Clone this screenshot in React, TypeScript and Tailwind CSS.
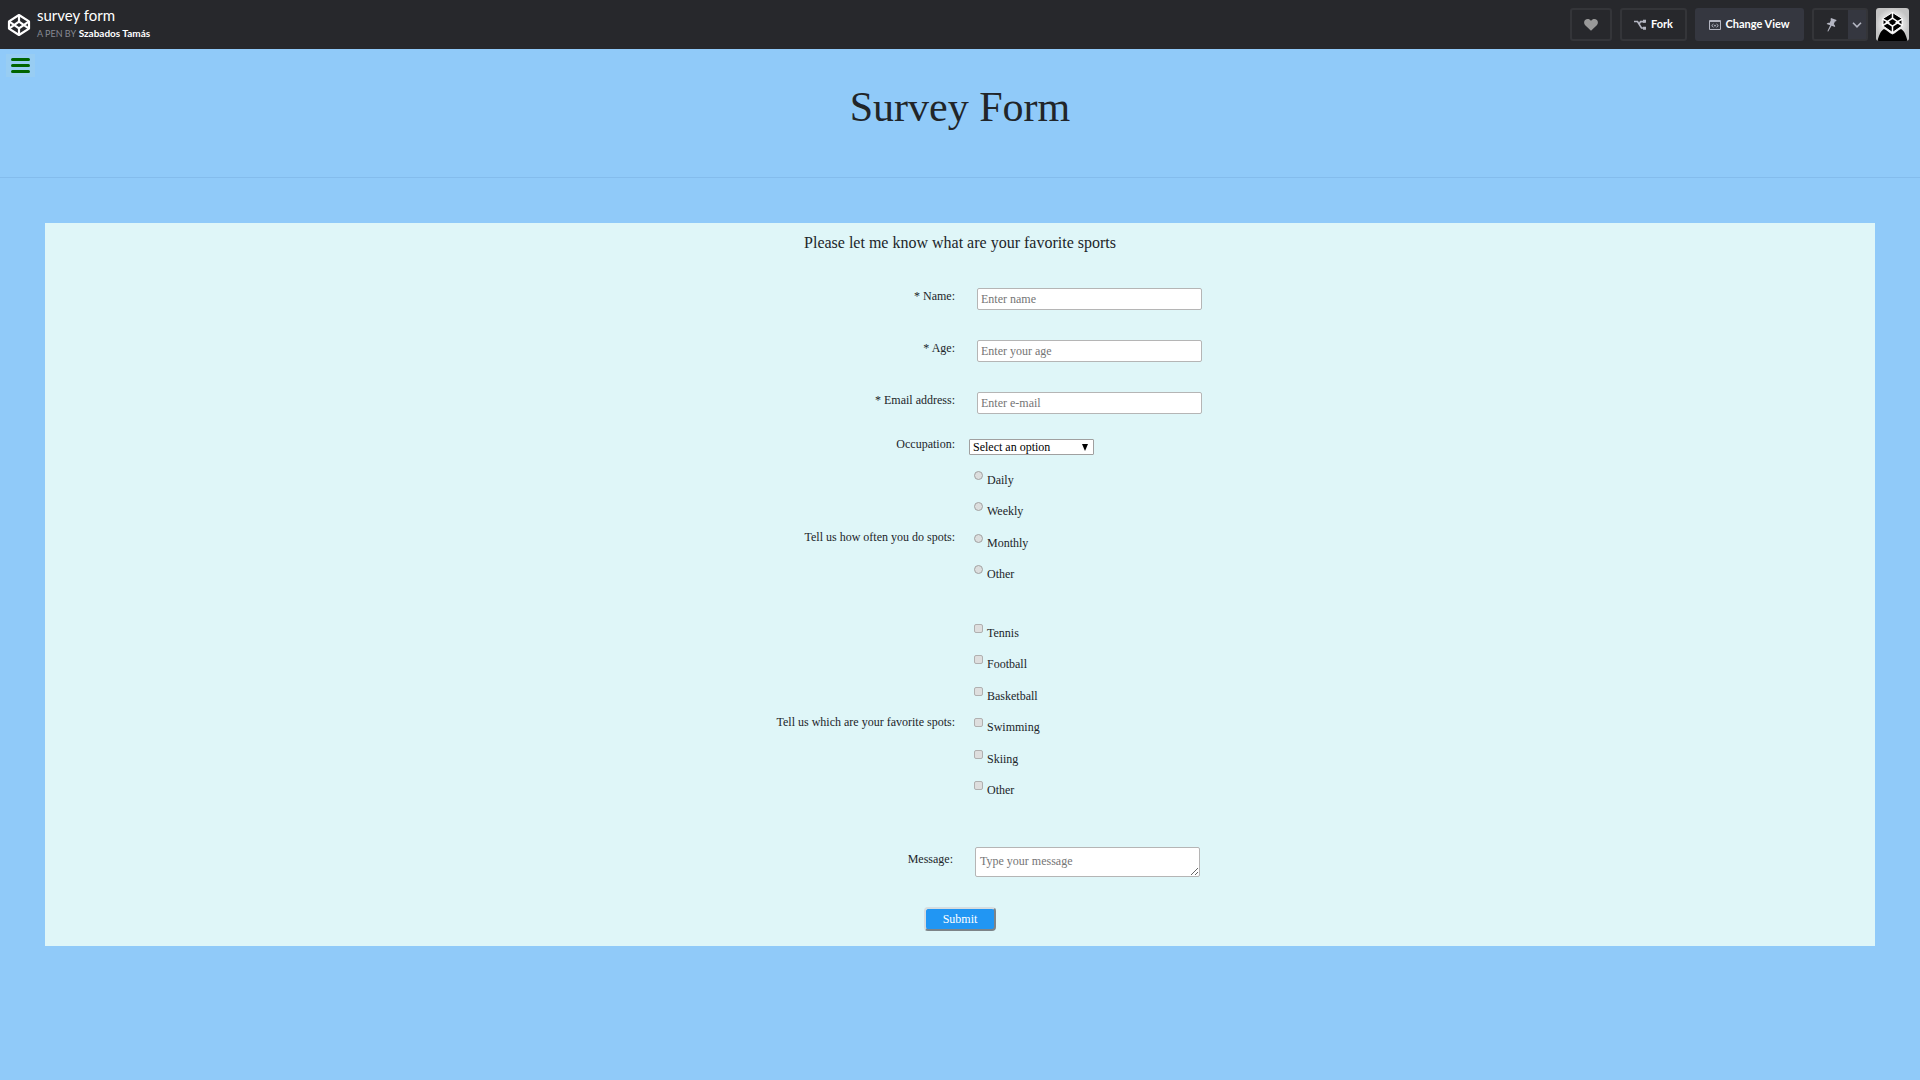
import type { ReactNode } from "react";

const occupations = ["Select an option", "Student", "Full time job", "Other"];
const frequencies = ["Daily", "Weekly", "Monthly", "Other"];
const sports = ["Tennis", "Football", "Basketball", "Swimming", "Skiing", "Other"];

function CodepenLogo() {
  return (
    <svg viewBox="0 0 24 24" className="size-6" fill="none" stroke="#fff" strokeWidth="2.2" strokeLinejoin="round" aria-hidden="true">
      <path d="M12 2 22 8.4v7.2L12 22 2 15.6V8.4Z" />
      <path d="M12 2v6.6M12 22v-6.6M2 8.4l10 7 10-7M2 15.6l10-7 10 7" />
    </svg>
  );
}

function HeartIcon() {
  return (
    <svg viewBox="0 0 14 12" className="h-3 w-3.5" fill="#999" aria-hidden="true">
      <path d="M7 11.8 1.2 6.3C-.3 4.700-.2 2.300 1.100 1.100 2.800-.5 5.600-.2 7 2 8.400-.2 11.200-.5 12.900 1.100c1.300 1.200 1.400 3.600-.1 5.200Z" />
    </svg>
  );
}

function ForkIcon() {
  return (
    <svg viewBox="0 0 13 12" className="h-3 w-[13px]" fill="none" stroke="#b4b6c2" strokeWidth="1.600" aria-hidden="true">
      <path d="M0 2.500h3.500l4 6.500H11M5.200 4.800 6.600 2.600H11" />
      <path d="M9 .8h3v3H9zM9 7.800h3v3H9z" fill="#b4b6c2" stroke="none" />
    </svg>
  );
}

function ViewIcon() {
  return (
    <svg viewBox="0 0 12 10" className="h-2.5 w-3" fill="none" stroke="#b4b6c2" aria-hidden="true">
      <path d="M.5.5h11v9H.5zM.5 1.500h11" />
      <path d="M4.500 4 2.700 5.600l1.800 1.600M7.500 4l1.800 1.600-1.800 1.600" />
      <circle cx="6" cy="5.600" r=".9" fill="#b4b6c2" stroke="none" />
    </svg>
  );
}

function PinIcon() {
  return (
    <svg viewBox="0 0 11 14" className="h-3.5 w-[11px]" fill="#b4b6c2" aria-hidden="true">
      <path d="M5 0 10.500 2 10 3.400 9 3.200 7.800 6.200c1 .6 1.500 1.600 1.300 2.800L5.600 7.800 2.200 13.500l-.8-.3 2.800-6L.6 5.900c.7-1 1.800-1.300 3-1L4.900 1.900 4.500 1.300Z" />
    </svg>
  );
}

function Avatar() {
  return (
    <svg viewBox="0 0 33 33" className="size-[33px] rounded-[3px]" aria-hidden="true">
      <defs>
        <radialGradient id="halo">
          <stop offset="0.300" stopColor="#fff" />
          <stop offset="1" stopColor="#c4c4c4" />
        </radialGradient>
      </defs>
      <path d="M0 0h33v33H0z" fill="url(#halo)" />
      <path d="M1.500 33C3 27 5 22.500 8 21c3.500 1.500 5 4 8.500 5.500C20 25 21.500 22.500 25 21c3 1.500 5 6 6.500 12Z" />
      <path d="M16.500 4.500 26 10.500v7.500l-9.500 6.500L7 18v-7.500Z" fill="#000" stroke="#fff" strokeWidth="1" />
      <g fill="none" stroke="#fff" strokeWidth="1.500">
        <path d="M16.500 4v6.500M16.500 18v7M6.500 11l6 3.200-6 3.300M26.500 11l-6 3.200 6 3.300" />
        <path d="m10.500 14.200 6-4 6 4-6 4Z" />
      </g>
    </svg>
  );
}

function Field({ id, label, placeholder, type }: { id: string; label: string; placeholder: string; type: string }) {
  return (
    <div className="mb-[30px] grid grid-cols-2">
      <label htmlFor={id} className="pr-[5px] text-right">
        {label}
      </label>
      <div className="flex pl-[17px]">
        <input
          id={id}
          type={type}
          placeholder={placeholder}
          className="h-[22px] w-[225px] rounded-xs border border-[#b5b5b5] bg-white px-[3px] placeholder:text-[#757575]"
        />
      </div>
    </div>
  );
}

function Choice({ kind, name, label }: { kind: "radio" | "checkbox"; name: string; label: string }) {
  const id = name + "-" + label.toLowerCase();
  return (
    <li className="flex h-5 items-start gap-1">
      <input
        id={id}
        type={kind}
        name={name}
        className={
          kind === "radio"
            ? "mt-0.5 size-[9px] appearance-none rounded-full border border-[#a2a2a2] bg-[#dcdede] checked:bg-[#555]"
            : "mt-0.5 size-[9px] appearance-none rounded-[2px] border border-[#b0b0b0] bg-[#dedede] checked:bg-[#555]"
        }
      />
      <label htmlFor={id} className="mt-[3px]">
        {label}
      </label>
    </li>
  );
}

function ChoiceGroup({ legend, listClass, children }: { legend: string; listClass: string; children: ReactNode }) {
  return (
    <div role="group" aria-label={legend} className="grid grid-cols-2 items-center">
      <p className="pr-[5px] text-right">{legend}</p>
      <ul className={"flex flex-col justify-between pb-[22px] pl-3.5 " + listClass}>{children}</ul>
    </div>
  );
}

const outlined = "flex items-center justify-center rounded-[3px] border-2 border-[#343539] h-[33px]";

export default function App() {
  return (
    <div className="min-h-screen bg-[#90caf9] font-['Liberation_Serif',serif] text-[#212529]">
      <header className="flex h-[49px] items-center justify-between bg-[#27282c] pr-[11px] pl-[7px] font-['Lato',sans-serif] text-white">
        <div className="flex items-center gap-1.5">
          <a href="#home" aria-label="CodePen">
            <CodepenLogo />
          </a>
          <div className="pb-0.5">
            <h2 className="text-[15px] leading-5">survey form</h2>
            <p className="text-[10px] leading-4">
              <span className="text-[9px] text-[#868993]">A PEN BY</span>{" "}
              <a href="#author" className="font-bold">
                Szabados Tamás
              </a>
            </p>
          </div>
        </div>
        <div className="flex items-center gap-2 text-[11px] font-bold">
          <button aria-label="Love" className={outlined + " w-[42px]"}>
            <HeartIcon />
          </button>
          <button className={outlined + " w-[67px] gap-1"}>
            <ForkIcon />
            Fork
          </button>
          <button className="flex h-[33px] w-[109px] items-center justify-center gap-1 rounded-[3px] bg-[#353740]">
            <ViewIcon />
            Change View
          </button>
          <div className={outlined + " w-14"}>
            <button aria-label="Pin" className="flex h-full flex-1 items-center justify-center">
              <PinIcon />
            </button>
            <button aria-label="More" className="flex h-full w-[18px] items-center justify-center bg-[#353740]">
              <svg viewBox="0 0 10 6" className="h-1.5 w-2.5" fill="none" stroke="#b4b6c2" strokeWidth="1.600" aria-hidden="true">
                <path d="m1 .8 4 4 4-4" />
              </svg>
            </button>
          </div>
          <button aria-label="Profile">
            <Avatar />
          </button>
        </div>
      </header>

      <div className="relative h-[129px] border-b border-[#84bcec]">
        <button aria-label="Menu" className="absolute top-[5px] left-1.5 flex h-[23px] w-[29px] flex-col items-center justify-center gap-[3px] bg-[#98cdf3]">
          <span className="h-[3px] w-[19px] rounded-xs bg-[#006400]" />
          <span className="h-[3px] w-[19px] rounded-xs bg-[#006400]" />
          <span className="h-[3px] w-[19px] rounded-xs bg-[#006400]" />
        </button>
        <h1 className="pt-[33px] text-center text-[42px] leading-[50px]">Survey Form</h1>
      </div>

      <main className="mx-[45px] mt-[45px] bg-[#dff6f8] pb-[15px] text-xs leading-4">
        <p className="pt-[9px] pb-[34px] text-center text-base leading-[22px]">Please let me know what are your favorite sports</p>
        <form>
          <Field id="name" type="text" label="* Name:" placeholder="Enter name" />
          <Field id="age" type="number" label="* Age:" placeholder="Enter your age" />
          <Field id="email" type="email" label="* Email address:" placeholder="Enter e-mail" />

          <div className="-mt-2 mb-3.5 grid grid-cols-2">
            <label htmlFor="occupation" className="pr-[5px] text-right">
              Occupation:
            </label>
            <div className="pt-[3px] pl-[9px]">
              <div className="relative w-[125px]">
                <select id="occupation" className="block h-4 w-full appearance-none rounded-[1px] border border-[#a0a0a0] bg-white pl-[3px] leading-[14px] text-black">
                  {occupations.map((o) => (
                    <option key={o}>{o}</option>
                  ))}
                </select>
                <svg viewBox="0 0 6 7" className="pointer-events-none absolute top-[5px] right-1.5 h-[7px] w-1.5" aria-hidden="true">
                  <path d="M0 0h6L3 7Z" />
                </svg>
              </div>
            </div>
          </div>

          <ChoiceGroup legend="Tell us how often you do spots:" listClass="h-[136px]">
            {frequencies.map((f) => (
              <Choice key={f} kind="radio" name="frequency" label={f} />
            ))}
          </ChoiceGroup>
          <div className="mt-[17px]">
            <ChoiceGroup legend="Tell us which are your favorite spots:" listClass="h-[199px]">
              {sports.map((s) => (
                <Choice key={s} kind="checkbox" name="sport" label={s} />
              ))}
            </ChoiceGroup>
          </div>

          <div className="mt-[26px] grid grid-cols-2">
            <label htmlFor="message" className="pt-1 pr-[7px] text-right">
              Message:
            </label>
            <div className="flex pl-[15px]">
              <textarea
                id="message"
                placeholder="Type your message"
                className="h-[30px] w-[225px] rounded-xs border border-[#b5b5b5] bg-white px-1 py-[5px] placeholder:text-[#757575]"
              />
            </div>
          </div>
          <div className="mt-[30px] flex justify-center">
            <button
              type="button"
              className="h-6 w-[72px] rounded-sm border-2 border-t-[#d6dde0] border-r-[#7d8488] border-b-[#7d8488] border-l-[#d6dde0] bg-[#2196f3] text-white"
            >
              Submit
            </button>
          </div>
        </form>
      </main>
    </div>
  );
}
